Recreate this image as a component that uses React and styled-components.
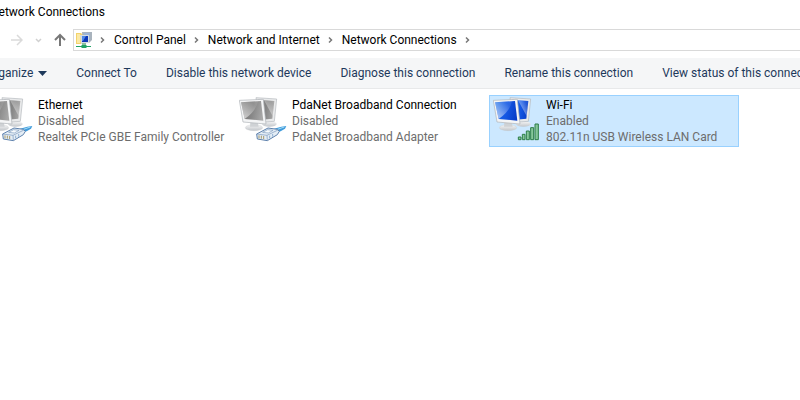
// App.jsx
import React, { useState } from 'react';
import styled, { createGlobalStyle } from 'styled-components';

const GlobalStyle = createGlobalStyle`
  body {
    margin: 0;
    overflow: hidden;
    background: #ffffff;
    font-family: Roboto, "Open Sans", sans-serif;
    font-size: 12px;
    line-height: 16px;
    color: #000000;
  }
`;

// the window hangs over the left edge of the desktop
const Window = styled.div`
  margin-left: -24px;
`;

const TitleBar = styled.header`
  padding: 4px 14px 9px;
`;

const Title = styled.h1`
  margin: 0;
  font-size: 12px;
  font-weight: 400;
  white-space: nowrap;
`;

const AddressRow = styled.div`
  display: flex;
  align-items: center;
`;

const NavButtons = styled.div`
  display: flex;
  align-items: center;
  justify-content: flex-end;
  gap: 12px;
  width: 90px;
  margin-right: 7px;
`;

const IconButton = styled.button`
  display: flex;
  padding: 0;
  border: 0;
  background: none;
`;

const AddressBox = styled.nav`
  display: flex;
  align-items: center;
  flex: 1;
  height: 20px;
  padding-left: 2px;
  border: 1px solid #d9d9d9;
  border-right: 0;
`;

const Crumb = styled.a`
  color: #000000;
  text-decoration: none;
  white-space: nowrap;
`;

const ChevronSlot = styled.span`
  display: flex;
  justify-content: center;
  width: 22px;
`;

const Toolbar = styled.div`
  display: flex;
  align-items: center;
  gap: 29px;
  height: 30px;
  margin-top: 7px;
  padding-left: 10px;
  background: #f5f6f7;
  border-bottom: 1px solid #e8e9ea;
`;

const Command = styled.button`
  display: flex;
  align-items: center;
  flex-shrink: 0;
  gap: 5px;
  padding: 0;
  border: 0;
  background: none;
  color: #1e395b;
  font: inherit;
  white-space: nowrap;
`;

const List = styled.main`
  display: flex;
  flex-wrap: wrap;
  gap: 4px;
  padding: 6px 5px;
`;

const Item = styled.button`
  display: flex;
  align-items: center;
  gap: 5px;
  box-sizing: border-box;
  width: 250px;
  padding: 1px 3px;
  border: 1px solid ${({ $selected }) => ($selected ? '#99d1ff' : 'transparent')};
  background: ${({ $selected }) => ($selected ? '#cce8ff' : 'transparent')};
  font: inherit;
  text-align: left;

  svg {
    flex-shrink: 0;
  }
`;

const Details = styled.span`
  display: flex;
  flex-direction: column;
  white-space: nowrap;
`;

const Name = styled.span`
  color: #000000;
`;

const Info = styled.span`
  color: #6d6d6d;
`;

const Chevron = () => (
  <svg width="6" height="8" viewBox="0 0 6 8" fill="none" stroke="#777777" strokeWidth="1.5">
    <path d="M1 1.5 L3.500 4 L1 6.5" />
  </svg>
);

const FolderIcon = () => (
  <svg width="16" height="16" viewBox="0 0 16 16">
    <path d="M0 1h5l1 1h3v10H0z" fill="#f3d36b" />
    <path d="M1 2h3v9H1z" fill="#fbe9a6" />
    <path d="M6 0h10v8l-3 3H7z" fill="#a9b3bd" />
    <path d="M8 1h6v7H9z" fill="#9cb4d8" />
    <path d="M4 3h9v8l-8 1z" fill="#d5dbe1" />
    <path d="M6 4h6v6H6z" fill="#0c37b8" />
    <path d="M6 4h4L7 9H6z" fill="#4d88ea" />
    <path d="M6 11h4v2H6z" fill="#8bbf9f" />
    <path d="M0 14h5l1-1h4l1 1h4v1h-4l-1 1H6l-1-1H0z" fill="#21a366" />
  </svg>
);

const Signal = () => (
  <g fill="#86c79a" stroke="#2c7d48" strokeWidth="3">
    <path d="M85 129h8v8h-8z" />
    <path d="M97 121h8v16h-8z" />
    <path d="M109 111h9v26h-9z" />
    <path d="M122 101h9v36h-9z" />
    <path d="M135 90h10v47h-10z" />
  </g>
);

const Plug = () => (
  <g strokeLinejoin="round">
    <path d="M114 104 L136 98 L151 96 L147 104 L134 112 L122 114z" fill="#3f9bdb" />
    <path d="M122 107 L145 99" stroke="#a5dcf7" strokeWidth="3" />
    <path d="M62 120 L96 102 L124 106 L130 112 L124 122 L94 140 L64 135z" fill="#e4edf5" stroke="#5f82ad" strokeWidth="3" />
    <path d="M62 120 L93 124 L126 108 M93 124 L94 139" fill="none" stroke="#7896bb" strokeWidth="2" />
    <path d="M80 115 L95 107 L111 109 L97 117z" fill="#f8fbfd" stroke="#7f9dc0" strokeWidth="2" />
    <path d="M101 125v8 M110 120v8" stroke="#8fb0d2" strokeWidth="3" />
    <path d="M69 124v9 M76 125v9 M83 126v9" stroke="#a89a6a" strokeWidth="3" />
  </g>
);

const ConnectionIcon = ({ enabled, id }) => (
  <svg width="48" height="48" viewBox="9 9 144 144">
    <defs>
      <linearGradient id={`${id}-screen`} x1="0" y1="0.4" x2="1" y2="0.6">
        <stop offset="0" stopColor={enabled ? '#1a6ae6' : '#787878'} />
        <stop offset="0.5" stopColor={enabled ? '#1558e4' : '#868686'} />
        <stop offset="1" stopColor={enabled ? '#063cc8' : '#a8a8a8'} />
      </linearGradient>
      <linearGradient id={`${id}-glare`} x1="1" y1="0" x2="0" y2="1">
        <stop offset="0.2" stopColor="#ffffff" stopOpacity="0.1" />
        <stop offset="1" stopColor="#ffffff" stopOpacity="0.7" />
      </linearGradient>
      <linearGradient id={`${id}-base`} x1="0" y1="0" x2="0" y2="1">
        <stop offset="0" stopColor="#f7f7f7" />
        <stop offset="1" stopColor="#c2c6ca" />
      </linearGradient>
    </defs>
    <ellipse cx="100" cy="90" rx="22" ry="8" fill={`url(#${id}-base)`} />
    <path d="M60 11 L122 15 L115 82 L70 85z" fill="#e9eaeb" stroke="#b4b8bc" strokeWidth="2" />
    <path d="M66 17 L115 21 L109 74 L70 78z" fill={`url(#${id}-screen)`} />
    <path d="M84 19 L115 21 L110 66z" fill={`url(#${id}-glare)`} />
    <ellipse cx="54" cy="101" rx="26" ry="9" fill={`url(#${id}-base)`} stroke="#c4c8cc" />
    <path d="M43 84h22l3 14H42z" fill="#cfd2d5" />
    <path d="M10 19 L82 16 L90 90 L21 84z" fill="#f4f5f6" stroke="#aeb2b6" strokeWidth="2" />
    <path d="M15 25 L75 21 L82 80 L26 75z" fill={`url(#${id}-screen)`} />
    <path d="M15 25 L66 22 Q60 52 26 75z" fill={`url(#${id}-glare)`} />
    {enabled ? <Signal /> : <Plug />}
  </svg>
);

const crumbs = ['Control Panel', 'Network and Internet', 'Network Connections'];

const commands = [
  'Connect To',
  'Disable this network device',
  'Diagnose this connection',
  'Rename this connection',
  'View status of this connection',
];

const connections = [
  { id: 'ethernet', name: 'Ethernet', status: 'Disabled', device: 'Realtek PCIe GBE Family Controller' },
  { id: 'pdanet', name: 'PdaNet Broadband Connection', status: 'Disabled', device: 'PdaNet Broadband Adapter' },
  { id: 'wifi', name: 'Wi-Fi', status: 'Enabled', device: '802.11n USB Wireless LAN Card' },
];

const App = () => {
  const [selected, setSelected] = useState('wifi');

  return (
    <>
      <GlobalStyle />
      <Window>
        <TitleBar>
          <Title>Network Connections</Title>
        </TitleBar>
        <AddressRow>
          <NavButtons>
            <IconButton aria-label="Forward">
              <svg width="13" height="12" viewBox="0 0 13 12" fill="none" stroke="#dadada" strokeWidth="1.5">
                <path d="M1 6h11M7 1l5 5-5 5" />
              </svg>
            </IconButton>
            <IconButton aria-label="Recent locations">
              <svg width="7" height="5" viewBox="0 0 7 5" fill="none" stroke="#d0d0d0" strokeWidth="1.5">
                <path d="M1 1l2.500 2.500 2.500-2.500" />
              </svg>
            </IconButton>
            <IconButton aria-label="Up">
              <svg width="12" height="14" viewBox="0 0 12 14" fill="none" stroke="#787878" strokeWidth="2">
                <path d="M6 13V2M1 7l5-5 5 5" />
              </svg>
            </IconButton>
          </NavButtons>
          <AddressBox aria-label="Address">
            <FolderIcon />
            <ChevronSlot><Chevron /></ChevronSlot>
            {crumbs.map((crumb) => (
              <React.Fragment key={crumb}>
                <Crumb href="#">{crumb}</Crumb>
                <ChevronSlot><Chevron /></ChevronSlot>
              </React.Fragment>
            ))}
          </AddressBox>
        </AddressRow>
        <Toolbar role="toolbar">
          <Command>
            Organize
            <svg width="9" height="5" viewBox="0 0 9 5" fill="#1e395b">
              <path d="M0 0h9L4.500 5z" />
            </svg>
          </Command>
          {commands.map((command) => (
            <Command key={command}>{command}</Command>
          ))}
        </Toolbar>
        <List>
          {connections.map(({ id, name, status, device }) => (
            <Item key={id} $selected={id === selected} onClick={() => setSelected(id)}>
              <ConnectionIcon id={id} enabled={status === 'Enabled'} />
              <Details>
                <Name>{name}</Name>
                <Info>{status}</Info>
                <Info>{device}</Info>
              </Details>
            </Item>
          ))}
        </List>
      </Window>
    </>
  );
};

export default App;
